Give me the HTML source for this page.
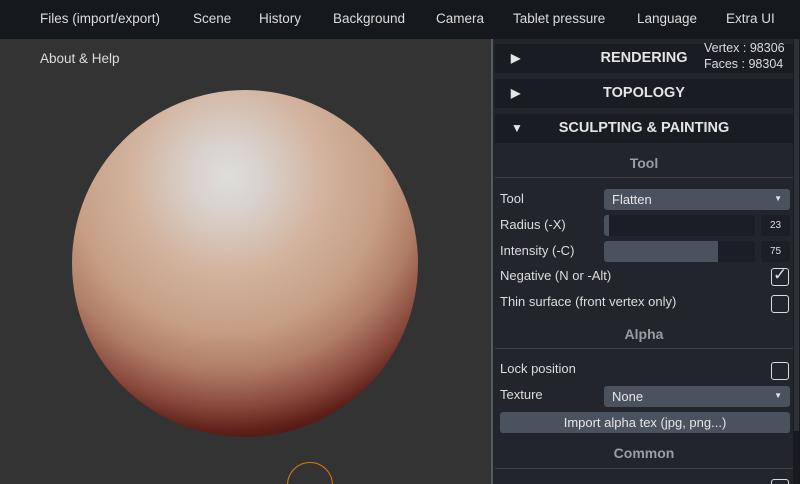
<!DOCTYPE html><html><head><style>
*{margin:0;padding:0;box-sizing:border-box}
html,body{width:800px;height:484px;overflow:hidden}
body{background:#333;font-family:"Liberation Sans",sans-serif;position:relative;color:#ddd}
.top{position:absolute;left:0;top:0;width:800px;height:39px;background:#15181d;font-size:13.5px;color:#ddd}
.top span{position:absolute;top:11px}
.ab{position:absolute;left:40px;top:51px;font-size:13.5px;color:#ddd}
.sph{position:absolute;left:72px;top:90px;width:346px;height:347px;border-radius:50%;
background:radial-gradient(circle farthest-corner at 45% 25%,#dededc 0%,#d9d0ca 12%,#d2b39e 30%,#c69e84 48%,#b07d66 60%,#8a4a3e 71%,#5e2019 79%,#40100d 86%)}
.cur{position:absolute;left:287px;top:462px;width:46px;height:46px;border:1px solid #d07a10;border-radius:50%}
.panel{position:absolute;left:491px;top:39px;width:309px;height:445px;background:#22252c;border-left:2px solid #555a62;overflow:hidden}
.scroll{position:absolute;right:0;top:0;width:7px;height:445px;background:#181a1f}
.scroll div{position:absolute;left:1px;top:0;width:5px;height:392px;background:#2d3037}
.hd{position:absolute;left:2px;width:298px;height:29px;background:#191c22;font-weight:bold;font-size:14.5px;color:#e4e4e4;text-align:center;line-height:29px}
.hd i{position:absolute;left:16px;font-style:normal;font-size:12px}
.sec{position:absolute;left:2px;width:298px;text-align:center;color:#9a9da2;font-size:14px;font-weight:bold}
.line{position:absolute;left:2px;width:298px;height:1px;background:#3c4048}
.lb{position:absolute;left:7px;font-size:13px;color:#ddd}
.sel{position:absolute;left:111px;width:186px;height:21px;background:#4a525e;border-radius:3px;font-size:13px;color:#e6e6e6;padding:3px 0 0 8px}
.sel:after{content:"▼";position:absolute;right:8px;top:5px;font-size:8px}
.bar{position:absolute;left:111px;width:151px;height:21px;background:#1b1e24;border-radius:3px;overflow:hidden}
.bar div{height:100%;background:#4a525e}
.num{position:absolute;left:268px;width:29px;height:21px;background:#1b1e24;border-radius:3px;font-size:10px;text-align:center;line-height:22px;color:#ddd}
.cb{position:absolute;left:278px;width:18px;height:18px;border:1.5px solid #ddd;border-radius:3px}
.btn{position:absolute;left:7px;width:290px;height:21px;background:#4a525e;border-radius:3px;font-size:13px;text-align:center;line-height:21px;color:#e6e6e6}
</style></head><body>
<div class="top"><span style="left:40px">Files (import/export)</span><span style="left:193px">Scene</span><span style="left:259px">History</span><span style="left:333px">Background</span><span style="left:436px">Camera</span><span style="left:513px">Tablet pressure</span><span style="left:637px">Language</span><span style="left:726px">Extra UI</span></div>
<div class="ab">About &amp; Help</div>
<div class="sph"></div>
<div class="cur"></div>
<div class="panel">
<div class="scroll"><div></div></div>
<div class="hd" style="top:5px"><i>▶</i>RENDERING</div>
<div style="position:absolute;left:211px;top:1px;font-size:12.5px;color:#ddd;line-height:16px">Vertex : 98306<br>Faces : 98304</div>
<div class="hd" style="top:40px"><i>▶</i>TOPOLOGY</div>
<div class="hd" style="top:75px"><i>▼</i>SCULPTING &amp; PAINTING</div>
<div class="sec" style="top:116px">Tool</div>
<div class="line" style="top:138px"></div>
<div class="lb" style="top:152px">Tool</div><div class="sel" style="top:150px">Flatten</div>
<div class="lb" style="top:178px">Radius (-X)</div><div class="bar" style="top:176px"><div style="width:5px"></div></div><div class="num" style="top:176px">23</div>
<div class="lb" style="top:204px">Intensity (-C)</div><div class="bar" style="top:202px"><div style="width:114px"></div></div><div class="num" style="top:202px">75</div>
<div class="lb" style="top:229px">Negative (N or -Alt)</div><div class="cb" style="top:229px"><span style="position:absolute;left:1px;top:-4px;font-size:17px">✓</span></div>
<div class="lb" style="top:255px">Thin surface (front vertex only)</div><div class="cb" style="top:256px"></div>
<div class="sec" style="top:287px">Alpha</div>
<div class="line" style="top:309px"></div>
<div class="lb" style="top:322px">Lock position</div><div class="cb" style="top:323px"></div>
<div class="lb" style="top:348px">Texture</div><div class="sel" style="top:347px">None</div>
<div class="btn" style="top:373px">Import alpha tex (jpg, png...)</div>
<div class="sec" style="top:406px">Common</div>
<div class="line" style="top:429px"></div>
<div class="cb" style="top:440px"></div>
</div>
</body></html>
